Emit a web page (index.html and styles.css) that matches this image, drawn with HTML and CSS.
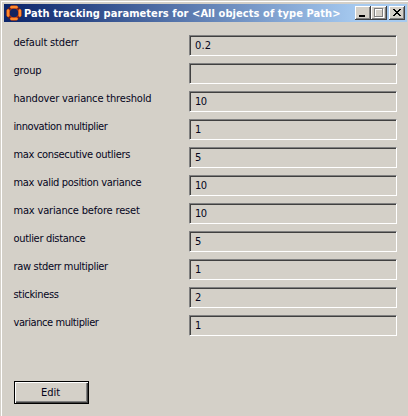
FILE: index.html
```
<!DOCTYPE html>
<html lang="en">
<head>
<meta charset="utf-8">
<title>Path tracking parameters</title>
<link rel="stylesheet" href="styles.css">
</head>
<body>
<main class="window">
  <header class="titlebar">
    <svg class="logo" width="16" height="16" viewBox="0 0 16 16">
      <path d="M5 0h6l1 3 4 2v6l-4 2-1 3H5l-1-3-4-2V5l4-2z" fill="#5a2030"/>
      <circle cx="8" cy="8" r="5.8" fill="none" stroke="#c8410f" stroke-width="2.8"/>
      <path d="M5.500 2h5M5.500 14h5M2 5.500v5M14 5.500v5" stroke="#ff8a2c" stroke-width="2.600" stroke-linecap="round"/>
      <path d="M2.500 2.500l2 2M13.500 2.500l-2 2M2.500 13.500l2-2M13.500 13.500l-2-2" stroke="#5a1b25" stroke-width="1.500"/>
      <path d="M6 4h4l2 2v4l-2 2H6l-2-2V6z" fill="#14245f"/>
    </svg>
    <h1 class="title">Path tracking parameters for &lt;All objects of type Path&gt;</h1>
    <div class="controls">
      <button class="control" aria-label="Minimize"><svg width="16" height="14" shape-rendering="crispEdges"><path d="M4 9h6v2H4z"/></svg></button>
      <button class="control" aria-label="Maximize"><svg width="16" height="14" shape-rendering="crispEdges"><path d="M4.500 3.500h8v8h-8z" fill="none" stroke="#fff"/><path d="M3.500 2.500h8v8h-8z" fill="none" stroke="#808080"/></svg></button>
      <button class="control close" aria-label="Close"><svg width="16" height="14" shape-rendering="crispEdges"><path d="M4 3h2v1h1v1h2V4h1V3h2v1h-1v1h-1v1H9v1h1v1h1v1h1v1h-2V9H9V8H7v1H6v1H4V9h1V8h1V7h1V6H6V5H5V4H4z"/></svg></button>
    </div>
  </header>
  <section class="form">
    <div class="row"><span class="label wide">default stderr</span><span class="field">0.2</span></div>
    <div class="row"><span class="label wide">group</span><span class="field"></span></div>
    <div class="row"><span class="label wide">handover variance threshold</span><span class="field integer">10</span></div>
    <div class="row"><span class="label narrow">innovation multiplier</span><span class="field integer">1</span></div>
    <div class="row"><span class="label">max consecutive outliers</span><span class="field integer">5</span></div>
    <div class="row"><span class="label">max valid position variance</span><span class="field integer">10</span></div>
    <div class="row"><span class="label wide">max variance before reset</span><span class="field integer">10</span></div>
    <div class="row"><span class="label">outlier distance</span><span class="field integer">5</span></div>
    <div class="row"><span class="label">raw stderr multiplier</span><span class="field integer">1</span></div>
    <div class="row"><span class="label">stickiness</span><span class="field integer">2</span></div>
    <div class="row"><span class="label narrow">variance multiplier</span><span class="field integer">1</span></div>
  </section>
  <button class="edit">Edit</button>
</main>
</body>
</html>
```
FILE: styles.css
```
* { box-sizing: border-box; }
body { margin: 0; background: #d4d0c8; overflow: hidden; }
.window {
  width: 408px;
  height: 416px;
  padding: 4px 1px 0 4px;
  background: #d4d0c8;
  box-shadow: inset 1px 1px #d4d0c8, inset 2px 2px #fff;
  font: 11px/13px "DejaVu Sans Condensed", "DejaVu Sans", sans-serif;
  font-stretch: condensed;
  color: #05051c;
}
.titlebar {
  display: flex;
  align-items: center;
  height: 18px;
  padding-left: 2px;
  background: linear-gradient(90deg, #0a246a, #a6caf0 88%);
}
.logo { flex: none; }
.title {
  flex: 1;
  margin: 0 0 0 2px;
  font: bold 11px/13px "DejaVu Sans Condensed", "DejaVu Sans", sans-serif;
  font-stretch: condensed;
  letter-spacing: 0.07px;
  white-space: nowrap;
  color: #fff;
}
.controls { display: flex; flex: none; padding-right: 2px; }
.control {
  width: 16px;
  height: 14px;
  padding: 0;
  border: 0;
  background: #d4d0c8;
  box-shadow: inset -1px -1px #404040, inset 1px 1px #fff, inset -2px -2px #808080;
}
.control svg { display: block; }
.close { margin-left: 2px; }
.form {
  display: grid;
  row-gap: 7px;
  padding: 13px 10px 0 9.5px;
}
.row {
  display: grid;
  grid-template-columns: 175.5px 208px;
  height: 21px;
}
.label { padding-top: 1px; letter-spacing: -0.32px; white-space: nowrap; }
.label.wide { letter-spacing: -0.17px; }
.label.narrow { letter-spacing: -0.42px; }
.field {
  height: 21px;
  padding: 3px 0 0 5px;
  border: 1px solid;
  border-color: #808080 #fff #fff #808080;
  box-shadow: inset 1px 1px #404040;
  letter-spacing: 0.2px;
}
.field.integer { letter-spacing: -0.6px; }
.edit {
  display: block;
  width: 75px;
  height: 23px;
  margin: 45px 0 0 10px;
  padding: 0 2px 0 0;
  border: 1px solid #000;
  background: #d4d0c8;
  box-shadow: inset 1px 1px #fff, inset -1px -1px #404040, inset -2px -2px #808080;
  font: inherit;
  color: inherit;
}
```
